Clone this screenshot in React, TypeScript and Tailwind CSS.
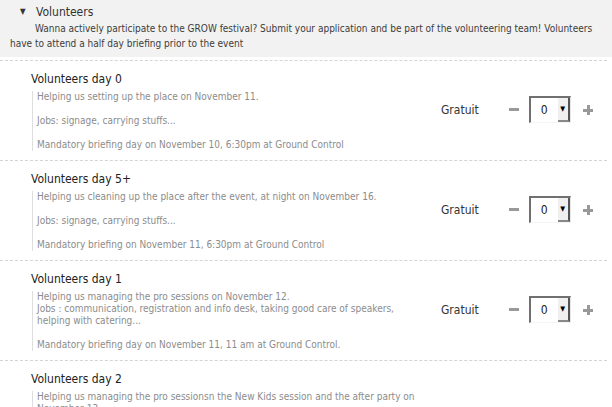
const FONT = "font-['DejaVu_Sans_Condensed','Liberation_Sans',sans-serif]"

type Ticket = {
  title: string
  lines: string[]
  tall?: boolean
}

const tickets: Ticket[] = [
  {
    title: 'Volunteers day 0',
    lines: [
      'Helping us setting up the place on November 11.',
      '',
      'Jobs: signage, carrying stuffs...',
      '',
      'Mandatory briefing day on November 10, 6:30pm at Ground Control',
    ],
  },
  {
    title: 'Volunteers day 5+',
    lines: [
      'Helping us cleaning up the place after the event, at night on November 16.',
      '',
      'Jobs: signage, carrying stuffs...',
      '',
      'Mandatory briefing on November 11, 6:30pm at Ground Control',
    ],
  },
  {
    title: 'Volunteers day 1',
    lines: [
      'Helping us managing the pro sessions on November 12.',
      'Jobs : communication, registration and info desk, taking good care of speakers,',
      'helping with catering...',
      '',
      'Mandatory briefing day on November 11, 11 am at Ground Control.',
    ],
  },
  {
    title: 'Volunteers day 2',
    lines: [
      'Helping us managing the pro sessionsn the New Kids session and the after party on',
      'November 13.',
      '',
      'Jobs : bar, registration, info desk, cloakroom...',
      '',
      'Mandatory briefing day on November 12, 6:30pm at Ground Control.',
    ],
    tall: true,
  },
]

function QtyPicker() {
  return (
    <div className="flex items-center">
      <span className="w-[10px] h-[3px] bg-[#999] mr-[10px]" />
      <div className="flex w-[42px] h-[27px] border-t-2 border-l-2 border-[#707070] border-r border-b border-r-[#e6e6e6] border-b-[#f4f4f4] bg-white">
        <span className="flex-1 flex items-center justify-center text-[12px] text-[#222]">0</span>
        <span className="w-[12px] flex items-center justify-center bg-[#f0f0f0] border-r-2 border-b-2 border-r-[#555] border-b-[#888] text-[7px] text-black">
          ▼
        </span>
      </div>
      <span className="relative ml-[12px] w-[10px] h-[10px]">
        <span className="absolute left-0 top-[4px] w-[10px] h-[3px] bg-[#999]" />
        <span className="absolute left-[4px] top-0 w-[3px] h-[10px] bg-[#999]" />
      </span>
    </div>
  )
}

function TicketRow({ ticket }: { ticket: Ticket }) {
  return (
    <div className={`flex border-t border-dashed border-[#d4d4d4] ${ticket.tall ? 'h-[124px]' : 'h-[100px]'}`}>
      <div className="w-[410px] pl-[31px] pt-[11px]">
        <p className="text-[12px] leading-[14px] text-[#222]">{ticket.title}</p>
        <div className="mt-[5px] ml-[1px] pl-[4px] border-l border-[#dedede] text-[10px] leading-[12px] text-[#8c8c8c] whitespace-nowrap">
          {ticket.lines.map((line, i) => (
            <p key={i} className="h-[12px]">
              {line}
            </p>
          ))}
        </div>
      </div>
      <div className="flex flex-1 items-center pb-[2px]">
        <span className="ml-[31px] text-[12px] text-[#333]">Gratuit</span>
        <span className="ml-[30px]">
          <QtyPicker />
        </span>
      </div>
    </div>
  )
}

export default function App() {
  return (
    <div className={`w-[612px] h-[407px] overflow-hidden bg-white ${FONT}`}>
      <div className="h-[57px] bg-[#f2f2f2] pt-[4px]">
        <div className="flex items-center h-[16px] pl-[20px]">
          <span className="text-[8px] text-[#333] w-[16px]">▼</span>
          <span className="text-[12px] text-[#333]">Volunteers</span>
        </div>
        <p className="mt-[1px] pl-[10px] pr-[10px] indent-[25px] text-[10px] leading-[15px] text-[#3c3c3c]">
          Wanna actively participate to the GROW festival? Submit your application and be part of the volunteering team! Volunteers have to attend a half day briefing prior to the event
        </p>
      </div>
      <div className="mt-[3px] w-[607px]">
        {tickets.map(t => (
          <TicketRow key={t.title} ticket={t} />
        ))}
      </div>
    </div>
  )
}
